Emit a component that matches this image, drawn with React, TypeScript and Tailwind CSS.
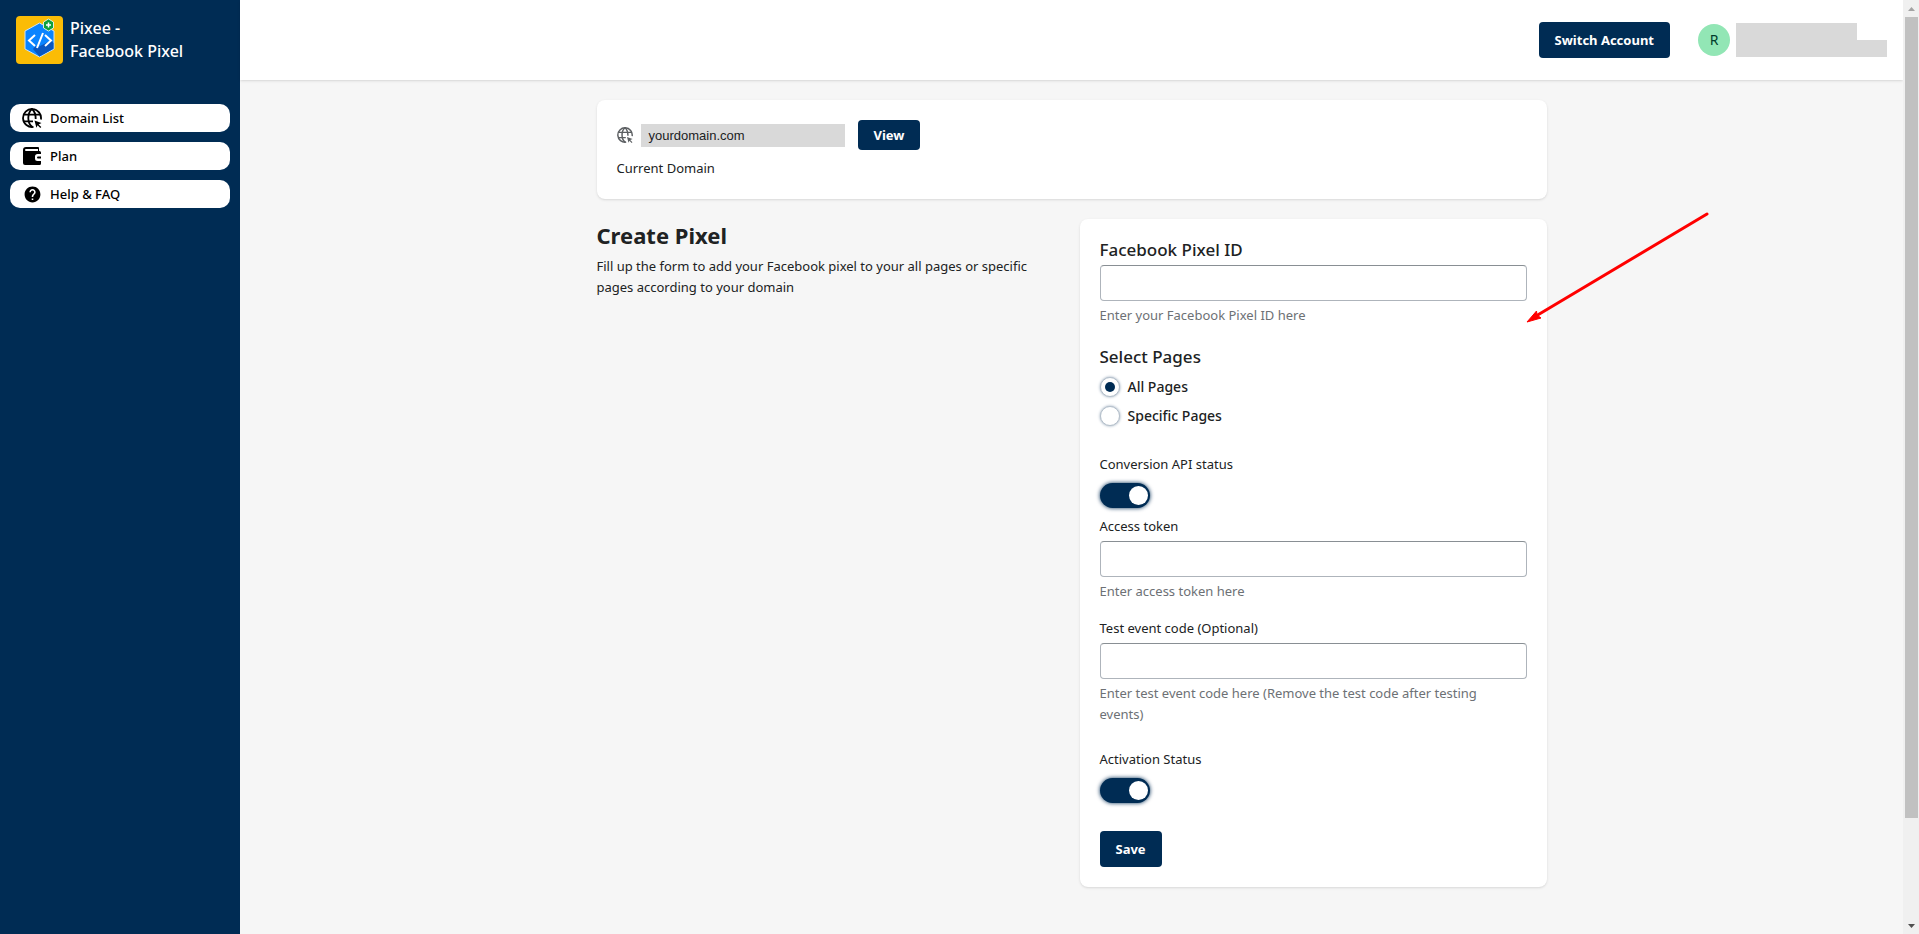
import { useState } from "react";
import { MdHelp } from "react-icons/md";

const GlobeCursor = ({ className }: { className?: string }) => (
  <svg viewBox="0 0 20 20" className={className} fill="none" stroke="currentColor" strokeWidth="1.8" aria-hidden="true">
    <path d="M18.900 11.500A9 9 0 1 0 11.500 18.900" />
    <path d="M10.500 19C8 17.500 6.300 14 6.300 10S7.600 3 10 1C12.400 3 13.700 6 13.700 11" />
    <path d="M1.700 6.700H18.300M1.700 13.300H11" />
    <path d="M12.500 12.500l7 2.600-2.900 1.300 2.700 2.600-1 1-2.700-2.700-1.200 2.500z" fill="currentColor" stroke="none" />
  </svg>
);

const Wallet = ({ className }: { className?: string }) => (
  <svg viewBox="0 0 18 18" className={className} fill="currentColor" aria-hidden="true">
    <path
      fillRule="evenodd"
      d="M3 0h12a1 1 0 0 1 1 1v3h.500A1.500 1.500 0 0 1 18 5.500V7h-3.500a2.500 2.500 0 0 0-2.500 2.500v2a2.500 2.500 0 0 0 2.500 2.500H18v2.500a1.500 1.500 0 0 1-1.500 1.500H2a2 2 0 0 1-2-2V3a3 3 0 0 1 3-3zM3 2a1 1 0 0 0 0 2h12V2z"
    />
    <path d="M15 9.500h3v2h-3a1 1 0 0 1 0-2z" />
  </svg>
);

const Logo = () => (
  <svg viewBox="0 0 47 48" className="h-12 w-[47px]" aria-hidden="true">
    <rect width="47" height="48" rx="4" fill="#fbbc05" />
    <path d="M23.500 7l14.500 8v18l-14.500 8-14.500-8V15z" fill="#0a84ff" stroke="#cfe3f5" />
    <path d="M35 24.500l2.500 2.500v5.700l-14 7.800-6.500-7.500 2-2.500 3 .5z" fill="#0a56c0" />
    <path d="M19 19l-6 5.500 6 5.500M29 19l6 5.500-6 5.500M27 17l-6 15" fill="none" stroke="#fff" strokeWidth="2" />
    <path d="M32.500 3l5 3v6l-5 3-5-3V6z" fill="#0fa03c" stroke="#dff0df" />
    <path d="M32.500 6.500v5M30 9h5" stroke="#fff" strokeWidth="1.500" />
  </svg>
);

const links = [
  { name: "Domain List", icon: <GlobeCursor className="h-5 w-5" /> },
  { name: "Plan", icon: <Wallet className="h-[18px] w-[18px]" /> },
  { name: "Help & FAQ", icon: <MdHelp className="text-[19px]" /> },
];

const Toggle = ({ label }: { label: string }) => {
  const [on, setOn] = useState(true);
  return (
    <label className="block">
      <span className="block">{label}</span>
      <input
        type="checkbox"
        role="switch"
        checked={on}
        onChange={() => setOn(!on)}
        className="mt-2 block h-[25px] w-[50px] appearance-none rounded-full bg-gray-400 p-[3px] shadow-[0_0_4px_#002c54] before:block before:h-[19px] before:w-[19px] before:rounded-full before:bg-white checked:bg-[#002c54] checked:before:ml-[26px]"
      />
    </label>
  );
};

const Field = ({ id, label, hint, big }: { id: string; label: string; hint: string; big?: boolean }) => (
  <div>
    <label htmlFor={id} className={big ? "block text-[17px] leading-[22px] font-medium" : "block"}>
      {label}
    </label>
    <input
      id={id}
      type="text"
      className="mt-1 block h-9 w-full rounded border border-[#aeb4bb] border-t-[#898f94] bg-white px-3 outline-none"
    />
    <p className="mt-1 pr-5 text-[#6d7175]">{hint}</p>
  </div>
);

const Arrow = () => (
  <svg viewBox="0 0 184 112" className="pointer-events-none absolute top-[-8px] left-[446px] h-28 w-[184px]" aria-hidden="true">
    <path d="M181 3L10 105" stroke="#f00" strokeWidth="3" strokeLinecap="round" />
    <path d="M1 111l9.500-11 .5 4 4 3z" fill="#f00" stroke="#f00" />
  </svg>
);

const App = () => {
  const [pages, setPages] = useState("All Pages");

  return (
    <div className="flex min-h-screen bg-[#f6f6f6] font-['Noto_Sans',sans-serif] text-[13px] leading-[21px] text-[#202223]">
      <aside className="w-60 shrink-0 bg-[#002c54]">
        <div className="flex h-20 items-center gap-[7px] px-4 text-white">
          <Logo />
          <p className="text-base leading-[23px] font-medium">
            Pixee -<br />
            Facebook Pixel
          </p>
        </div>
        <nav className="mt-6 flex flex-col gap-2.5 px-2.5">
          {links.map((link) => (
            <a key={link.name} href="#" className="flex h-7 items-center rounded-[10px] bg-white font-medium text-black">
              <span className="flex w-10 justify-center pl-1">{link.icon}</span>
              {link.name}
            </a>
          ))}
        </nav>
      </aside>

      <div className="flex min-w-0 flex-1 flex-col">
        <header className="flex h-20 items-center justify-end bg-white pr-4 shadow">
          <button className="h-9 rounded bg-[#002c54] px-4 font-bold text-white">Switch Account</button>
          <span className="ml-7 flex h-8 w-8 items-center justify-center rounded-full bg-[#92e6b5] text-sm text-[#003d2c]">R</span>
          <div className="ml-1.5">
            <div className="h-[17px] w-[121px] bg-[#d9d9d9]" />
            <div className="h-[17px] w-[151px] bg-[#d9d9d9]" />
          </div>
        </header>

        <main className="mx-auto w-full max-w-[950px] py-5">
          <section className="rounded-lg bg-white p-5 shadow">
            <div className="flex items-center">
              <GlobeCursor className="h-4 w-4 text-[#5c5f62]" />
              <span className="ml-2 h-[23px] w-[204px] bg-[#d9d9d9] px-2 font-['Liberation_Sans',sans-serif] leading-[23px]">
                yourdomain.com
              </span>
              <button className="ml-[13px] h-[30px] rounded bg-[#002c54] px-4 font-bold text-white">View</button>
            </div>
            <p className="mt-2">Current Domain</p>
          </section>

          <div className="mt-5 grid grid-cols-2 items-start gap-4">
            <div>
              <h1 className="mb-1 text-[22px] leading-[33px] font-bold">Create Pixel</h1>
              <p>Fill up the form to add your Facebook pixel to your all pages or specific pages according to your domain</p>
            </div>

            <form className="relative rounded-lg bg-white p-5 shadow" onSubmit={(e) => e.preventDefault()}>
              <Field id="pixel" label="Facebook Pixel ID" hint="Enter your Facebook Pixel ID here" big />

              <fieldset className="mt-5">
                <legend className="text-[17px] leading-[22px] font-medium">Select Pages</legend>
                {["All Pages", "Specific Pages"].map((name) => (
                  <label key={name} className="mt-2 flex items-center gap-2 text-sm leading-[21px] font-medium">
                    <input
                      type="radio"
                      name="pages"
                      checked={pages === name}
                      onChange={() => setPages(name)}
                      className="flex h-5 w-5 appearance-none items-center justify-center rounded-full border border-[#b4bfca] bg-white shadow-[0_0_3px_#8c9fb3] before:h-2.5 before:w-2.5 before:rounded-full checked:before:bg-[#002c54]"
                    />
                    {name}
                  </label>
                ))}
              </fieldset>

              <div className="mt-7 mb-2">
                <Toggle label="Conversion API status" />
              </div>
              <Field id="token" label="Access token" hint="Enter access token here" />
              <div className="mt-4 mb-6">
                <Field id="code" label="Test event code (Optional)" hint="Enter test event code here (Remove the test code after testing events)" />
              </div>
              <Toggle label="Activation Status" />
              <button type="submit" className="mt-7 h-9 rounded bg-[#002c54] px-4 font-bold text-white">
                Save
              </button>
              <Arrow />
            </form>
          </div>
        </main>
      </div>

      <div className="sticky top-0 flex h-screen w-4 shrink-0 flex-col items-center bg-[#f0f0f0]" aria-hidden="true">
        <svg viewBox="0 0 16 17" className="h-[17px] w-4 shrink-0">
          <path d="M5 11h7L8.500 7z" fill="#a3a3a3" />
        </svg>
        <div className="min-h-0 flex-1 self-stretch pr-px pl-0.5">
          <div className="h-[89%] bg-[#c1c1c1]" />
        </div>
        <svg viewBox="0 0 16 17" className="h-[17px] w-4 shrink-0">
          <path d="M5 7h7l-3.500 4z" fill="#505050" />
        </svg>
      </div>
    </div>
  );
};

export default App;
